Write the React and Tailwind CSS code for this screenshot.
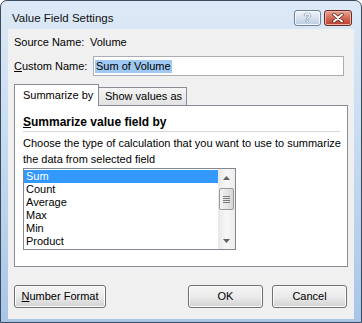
export default function App() {
  const items = ["Sum", "Count", "Average", "Max", "Min", "Product"];
  const btn =
    "h-[23px] rounded-[3px] border border-[#707070] bg-gradient-to-b from-[#f4f4f4] via-[#ebebeb] to-[#d2d2d2] shadow-[inset_0_0_0_1px_#fbfbfb] flex items-center justify-center text-[11px]";

  return (
    <div className="w-[362px] h-[323px] font-['Liberation_Sans',Arial,sans-serif] text-[11px] text-black">
      <div className="w-full h-full flex flex-col border border-[#3b4b5e] rounded-t-[7px] bg-gradient-to-b from-[#dde9f6] via-[#c4d9ef] to-[#a8c5e8] px-[7px] pb-[3px]">
        {/* title bar */}
        <div className="h-[28px] flex items-start justify-between">
          <span className="mt-[10px] pl-[4px] leading-[14px] text-[11.5px] text-[#111]">Value Field Settings</span>
          <div className="flex gap-[3px] mt-[9px] mr-[2px]">
            <div className="w-[27px] h-[16px] rounded-[3px] border border-[#6f8299] bg-gradient-to-b from-[#eef3f9] via-[#d6e2ef] to-[#b9cce2] shadow-[inset_0_0_0_1px_#f6f9fc] flex items-center justify-center">
              <span className="text-[12px] leading-[12px] font-bold text-[#f4f7fb] [text-shadow:0_0_1px_#4b5d74,0_0_1px_#4b5d74]">?</span>
            </div>
            <div className="w-[28px] h-[16px] rounded-[3px] border border-[#6a2a22] bg-gradient-to-b from-[#e7a596] via-[#d26a58] to-[#b83a28] shadow-[inset_0_0_0_1px_#eab4a8] flex items-center justify-center">
              <svg width="12" height="10" viewBox="0 0 12 10">
                <path d="M2 1.5 L10 8.5 M10 1.5 L2 8.5" stroke="#5a1a12" strokeWidth="3.4" strokeLinecap="round" />
                <path d="M2 1.5 L10 8.5 M10 1.5 L2 8.5" stroke="#ffffff" strokeWidth="2" strokeLinecap="round" />
              </svg>
            </div>
          </div>
        </div>

        {/* client area */}
        <div className="flex-1 bg-[#f0f0f0] px-[6px] pt-[6px] flex flex-col">
          <div className="h-[15px] flex items-center">
            <span className="w-[76px]">Source Name:</span>
            <span>Volume</span>
          </div>

          <div className="mt-[6px] h-[20px] flex items-center">
            <span className="w-[79px]">
              <span className="underline">C</span>ustom Name:
            </span>
            <div className="w-[251px] h-[20px] border border-[#abadb3] bg-white flex items-center pl-[1px]">
              <span className="bg-[#9fc9f2] leading-[13px] px-[1px]">Sum of Volume</span>
            </div>
          </div>

          {/* tabs */}
          <div className="mt-[8px] flex items-end h-[21px] relative z-10">
            <div className="w-[85px] h-[22px] -mb-px border border-b-0 border-[#898c95] bg-white flex items-center pl-[8px]">
              Summarize by
            </div>
            <div className="w-[88px] h-[18px] border border-l-0 border-b-0 border-[#898c95] bg-gradient-to-b from-[#f5f5f5] to-[#e2e2e2] flex items-center pl-[6px]">
              Show values as
            </div>
          </div>
          <div className="h-[162px] border border-[#898c95] bg-white px-[8px] pt-[9px]">
            <div className="font-bold text-[12px] leading-[15px]">
              <span className="underline">S</span>ummarize value field by
            </div>
            <div className="mt-[1px] h-px w-[317px] bg-[#d8d8d8]" />
            <div className="mt-[3px] leading-[16px] whitespace-nowrap">
              Choose the type of calculation that you want to use to summarize
              <br />
              the data from selected field
            </div>
            <div className="mt-[1px] w-[213px] h-[82px] border border-[#828790] flex">
              <div className="flex-1 pt-px">
                {items.map((it, i) => (
                  <div
                    key={it}
                    className={`h-[13px] leading-[13px] pl-[2px] ${i === 0 ? "bg-[#3399ff] text-white" : ""}`}
                  >
                    {it}
                  </div>
                ))}
              </div>
              <div className="w-[17px] bg-gradient-to-r from-[#e8e8e8] via-[#f7f7f7] to-[#ececec] flex flex-col items-center">
                <div className="h-[17px] flex items-center justify-center">
                  <svg width="7" height="4" viewBox="0 0 7 4">
                    <path d="M3.5 0 L7 4 L0 4 Z" fill="#606060" />
                  </svg>
                </div>
                <div className="mt-[2px] w-[15px] h-[22px] rounded-[2px] border border-[#9a9a9a] bg-gradient-to-r from-[#f3f3f3] via-[#e6e6e6] to-[#d6d6d6] flex flex-col items-center justify-center gap-[1px]">
                  <div className="w-[7px] h-px bg-[#7b7b7b]" />
                  <div className="w-[7px] h-px bg-[#7b7b7b]" />
                  <div className="w-[7px] h-px bg-[#7b7b7b]" />
                  <div className="w-[7px] h-px bg-[#7b7b7b]" />
                </div>
                <div className="mt-auto h-[17px] flex items-center justify-center">
                  <svg width="7" height="4" viewBox="0 0 7 4">
                    <path d="M0 0 L7 0 L3.5 4 Z" fill="#606060" />
                  </svg>
                </div>
              </div>
            </div>
          </div>

          {/* buttons */}
          <div className="mt-[18px] flex items-center pr-[1px]">
            <div className={`${btn} w-[92px]`}>
              <span>
                <span className="underline">N</span>umber Format
              </span>
            </div>
            <div className={`${btn} w-[75px] ml-auto border-[#3c7fb1] shadow-[inset_0_0_0_1px_#a6dcf6]`}>OK</div>
            <div className={`${btn} w-[75px] ml-[9px]`}>Cancel</div>
          </div>
        </div>
      </div>
    </div>
  );
}
